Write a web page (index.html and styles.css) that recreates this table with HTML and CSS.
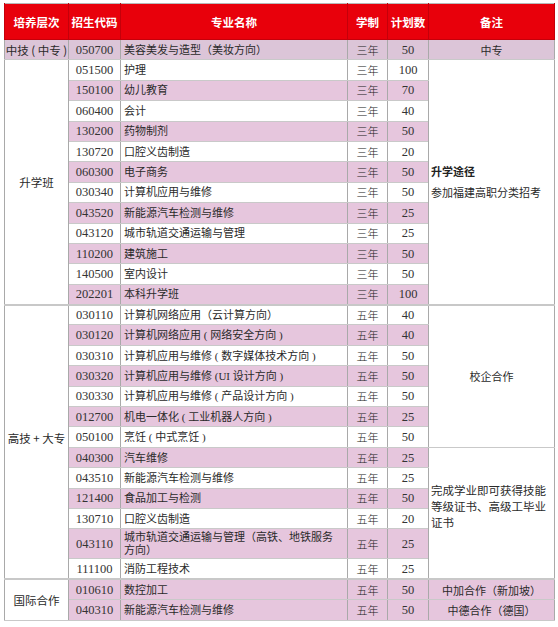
FILE: index.html
```html
<!DOCTYPE html>
<html lang="zh">
<head>
<meta charset="utf-8">
<link rel="stylesheet" href="styles.css">
</head>
<body>
<table class="plan">
  <colgroup>
    <col class="c-level"><col class="c-code"><col class="c-name"><col class="c-years"><col class="c-count"><col class="c-note">
  </colgroup>
  <thead>
    <tr class="head">
      <th>培养层次</th><th>招生代码</th><th>专业名称</th><th>学制</th><th>计划数</th><th>备注</th>
    </tr>
  </thead>
  <tbody>
    <tr class="p first">
      <td class="level lv-pink">中技 ( 中专 )</td><td class="code">050700</td><td class="name">美容美发与造型（美妆方向）</td><td class="yr">三年</td><td class="num">50</td><td class="note center pinknote first-note">中专</td>
    </tr>
    <tr>
      <td class="level" rowspan="12">升学班</td><td class="code">051500</td><td class="name">护理</td><td class="yr">三年</td><td class="num">100</td>
      <td class="note path" rowspan="12"><div class="note-title">升学途径</div><div>参加福建高职分类招考</div></td>
    </tr>
    <tr class="p"><td class="code">150100</td><td class="name">幼儿教育</td><td class="yr">三年</td><td class="num">70</td></tr>
    <tr><td class="code">060400</td><td class="name">会计</td><td class="yr">三年</td><td class="num">40</td></tr>
    <tr class="p"><td class="code">130200</td><td class="name">药物制剂</td><td class="yr">三年</td><td class="num">50</td></tr>
    <tr><td class="code">130720</td><td class="name">口腔义齿制造</td><td class="yr">三年</td><td class="num">20</td></tr>
    <tr class="p"><td class="code">060300</td><td class="name">电子商务</td><td class="yr">三年</td><td class="num">50</td></tr>
    <tr><td class="code">030340</td><td class="name">计算机应用与维修</td><td class="yr">三年</td><td class="num">50</td></tr>
    <tr class="p"><td class="code">043520</td><td class="name">新能源汽车检测与维修</td><td class="yr">三年</td><td class="num">25</td></tr>
    <tr><td class="code">043120</td><td class="name">城市轨道交通运输与管理</td><td class="yr">三年</td><td class="num">25</td></tr>
    <tr class="p"><td class="code">110200</td><td class="name">建筑施工</td><td class="yr">三年</td><td class="num">50</td></tr>
    <tr><td class="code">140500</td><td class="name">室内设计</td><td class="yr">三年</td><td class="num">50</td></tr>
    <tr class="p"><td class="code">202201</td><td class="name">本科升学班</td><td class="yr">三年</td><td class="num">100</td></tr>
    <tr class="group-start">
      <td class="level level-low" rowspan="13">高技 + 大专</td><td class="code">030110</td><td class="name">计算机网络应用（云计算方向）</td><td class="yr">五年</td><td class="num">40</td>
      <td class="note center" rowspan="7">校企合作</td>
    </tr>
    <tr class="p"><td class="code">030120</td><td class="name">计算机网络应用 ( 网络安全方向 )</td><td class="yr">五年</td><td class="num">40</td></tr>
    <tr><td class="code">030310</td><td class="name">计算机应用与维修 ( 数字媒体技术方向 )</td><td class="yr">五年</td><td class="num">50</td></tr>
    <tr class="p"><td class="code">030320</td><td class="name">计算机应用与维修 (UI 设计方向 )</td><td class="yr">五年</td><td class="num">50</td></tr>
    <tr><td class="code">030330</td><td class="name">计算机应用与维修 ( 产品设计方向 )</td><td class="yr">五年</td><td class="num">50</td></tr>
    <tr class="p"><td class="code">012700</td><td class="name">机电一体化 ( 工业机器人方向 )</td><td class="yr">五年</td><td class="num">25</td></tr>
    <tr><td class="code">050100</td><td class="name">烹饪 ( 中式烹饪 )</td><td class="yr">五年</td><td class="num">50</td></tr>
    <tr class="p">
      <td class="code">040300</td><td class="name">汽车维修</td><td class="yr">五年</td><td class="num">25</td>
      <td class="note cert" rowspan="6">完成学业即可获得技能等级证书、高级工毕业证书</td>
    </tr>
    <tr><td class="code">043510</td><td class="name">新能源汽车检测与维修</td><td class="yr">五年</td><td class="num">25</td></tr>
    <tr class="p"><td class="code">121400</td><td class="name">食品加工与检测</td><td class="yr">五年</td><td class="num">50</td></tr>
    <tr><td class="code">130710</td><td class="name">口腔义齿制造</td><td class="yr">五年</td><td class="num">20</td></tr>
    <tr class="p tall"><td class="code">043110</td><td class="name">城市轨道交通运输与管理（高铁、地铁服务方向）</td><td class="yr">五年</td><td class="num">25</td></tr>
    <tr><td class="code">111100</td><td class="name">消防工程技术</td><td class="yr">五年</td><td class="num">25</td></tr>
    <tr class="p group-start">
      <td class="level" rowspan="2">国际合作</td><td class="code">010610</td><td class="name">数控加工</td><td class="yr">五年</td><td class="num">50</td><td class="note center pinknote">中加合作（新加坡）</td>
    </tr>
    <tr class="p"><td class="code">040310</td><td class="name">新能源汽车检测与维修</td><td class="yr">五年</td><td class="num">50</td><td class="note center pinknote">中德合作（德国）</td></tr>
  </tbody>
</table>
</body>
</html>
```
FILE: styles.css
```css
html, body {
  margin: 0;
  padding: 0;
  background: #ffffff;
}
body {
  padding: 3px 0 0 4px;
  font-family: "Liberation Serif", "Noto Sans CJK SC", serif;
  color: #2a2a2a;
}
.plan {
  border-collapse: collapse;
  table-layout: fixed;
  width: 550px;
  font-size: 11px;
  border: 1px solid #b8b8b8;
}
.c-level { width: 64px; }
.c-code { width: 52px; }
.c-name { width: 227px; }
.c-years { width: 40px; }
.c-count { width: 41px; }
.c-note { width: 126px; }

.head th {
  background: #e8000b;
  color: #ffffff;
  height: 35px;
  padding: 0;
  font-family: "Noto Sans CJK SC", sans-serif;
  font-weight: 700;
  font-size: 11.5px;
  border: 1px solid #c4000a;
  border-top: none;
}
.plan td {
  height: 20.4px;
  padding: 0;
  border: 1px solid #a9a9a9;
  border-top-color: #c9c9c9;
  border-bottom-color: #c9c9c9;
  line-height: 14px;
  box-sizing: border-box;
  white-space: nowrap;
}
.plan td.code, .plan td.num {
  font-size: 12.5px;
  text-align: center;
  color: #333333;
}
.plan td.yr {
  text-align: center;
  font-family: "Noto Sans CJK SC", sans-serif;
  font-weight: 300;
  color: #222222;
}
.plan td.name {
  padding-left: 3px;
  font-family: "Liberation Serif", "Noto Sans CJK SC", serif;
}
.plan td.level {
  text-align: center;
  background: #ffffff;
  font-family: "Noto Sans CJK SC", sans-serif;
  font-size: 11.5px;
}
.plan td.level-low {
  vertical-align: top;
  padding-top: 125px;
}
.plan td.lv-pink {
  background: #dcc5d8;
}
.plan tr.p td.code,
.plan tr.p td.name,
.plan tr.p td.yr,
.plan tr.p td.num {
  background: #e6c6dd;
}
.plan tr.first td.code,
.plan tr.first td.name,
.plan tr.first td.yr,
.plan tr.first td.num {
  background: #dcc5d8;
}
.plan tr.tall td {
  height: 30px;
}
.plan tr.tall td.name {
  white-space: normal;
  line-height: 13px;
  padding-right: 4px;
}
.plan td.note {
  background: #ffffff;
  font-family: "Noto Sans CJK SC", sans-serif;
  font-size: 11px;
}
.plan td.center {
  text-align: center;
}
.plan td.pinknote {
  background: #e6c6dd;
}
.plan td.first-note {
  background: #dcc5d8;
}
.plan td.path {
  padding-left: 2px;
  line-height: 21px;
}
.note-title {
  font-weight: 700;
  color: #222222;
}
.plan td.cert {
  white-space: normal;
  padding: 0 2px 14px 2px;
  line-height: 16px;
  font-size: 11.5px;
}
.plan tr.group-start td {
  border-top: 2px solid #c8c8c8;
}
```
